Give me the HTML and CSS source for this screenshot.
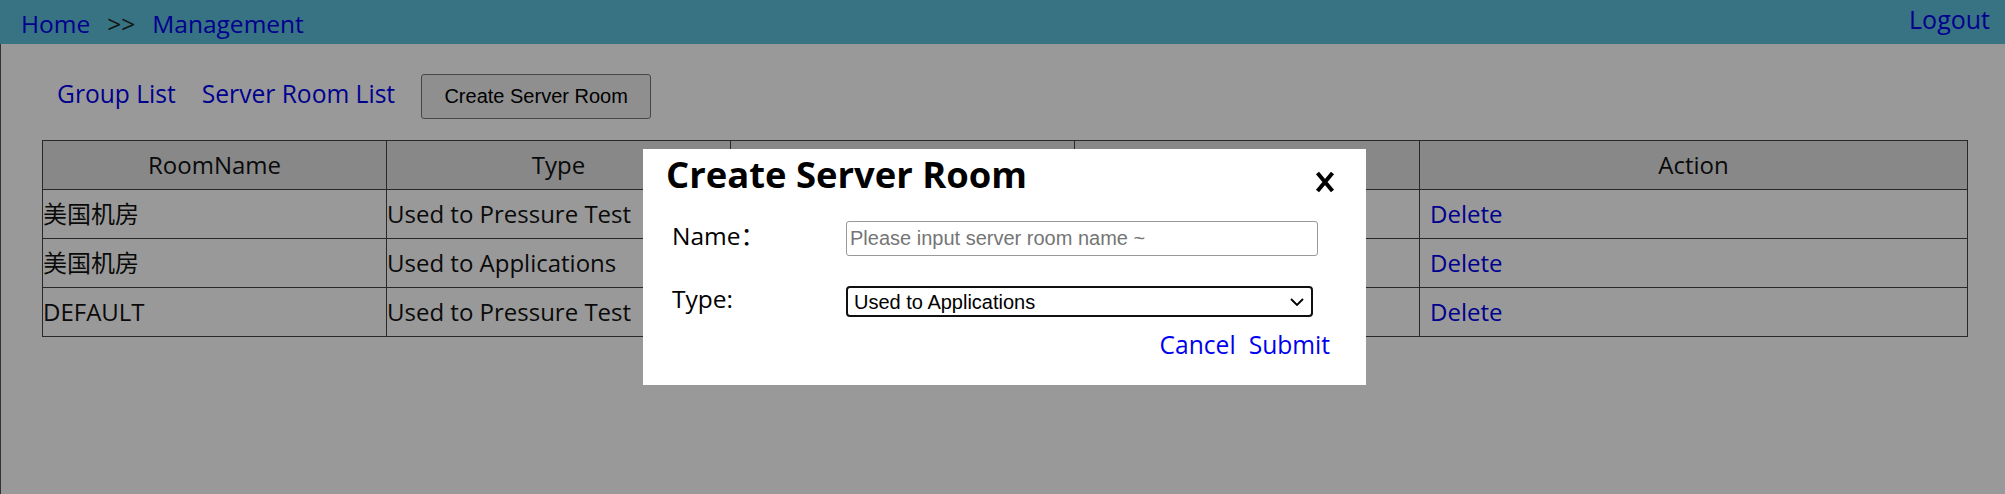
FILE: index.html
```html
<!DOCTYPE html>
<html lang="en">
<head>
<meta charset="utf-8">
<title>Server Room List</title>
<link rel="stylesheet" href="styles.css">
</head>
<body>
<header class="topbar">
  <nav class="crumbs"><a href="#">Home</a><span class="sep">&gt;&gt;</span><a href="#">Management</a></nav>
  <a class="logout" href="#">Logout</a>
</header>
<main class="content">
  <div class="toolbar">
    <a href="#" class="tab">Group List</a>
    <a href="#" class="tab">Server Room List</a>
    <button class="btn" type="button">Create Server Room</button>
  </div>
  <table class="rooms">
    <colgroup>
      <col class="c-name"><col class="c-type"><col class="c-desc"><col class="c-time"><col class="c-act">
    </colgroup>
    <thead>
      <tr><th>RoomName</th><th>Type</th><th></th><th></th><th>Action</th></tr>
    </thead>
    <tbody>
      <tr><td>美国机房</td><td>Used to Pressure Test</td><td></td><td></td><td class="act"><a href="#">Delete</a></td></tr>
      <tr><td>美国机房</td><td>Used to Applications</td><td></td><td></td><td class="act"><a href="#">Delete</a></td></tr>
      <tr><td>DEFAULT</td><td>Used to Pressure Test</td><td></td><td></td><td class="act"><a href="#">Delete</a></td></tr>
    </tbody>
  </table>
</main>
<div class="mask"></div>
<div class="dialog">
  <div class="dlg-head">
    <h2 class="dlg-title">Create Server Room</h2>
    <svg class="close" viewBox="0 0 22 24" width="22" height="24" aria-label="close"><path d="M3.5 3 L18.5 21 M18.5 3 L3.5 21" stroke="#000" stroke-width="4" fill="none"/></svg>
  </div>
  <div class="form-row row-name">
    <span class="label">Name：</span>
    <input class="field" type="text" placeholder="Please input server room name ~">
  </div>
  <div class="form-row row-type">
    <span class="label">Type:</span>
    <div class="select-wrap">
      <select class="select">
        <option>Used to Applications</option>
        <option>Used to Pressure Test</option>
      </select>
      <svg class="chev" viewBox="0 0 14 8" width="14" height="8"><path d="M1 1 L7 7 L13 1" stroke="#000" stroke-width="1.8" fill="none"/></svg>
    </div>
  </div>
  <div class="actions">
    <a href="#">Cancel</a>
    <a href="#">Submit</a>
  </div>
</div>
</body>
</html>
```
FILE: styles.css
```css
html, body {
  margin: 0;
  height: 100%;
}
body {
  font-family: "Open Sans", "Noto Sans CJK SC", sans-serif;
  font-size: 24px;
  color: #111;
  background: #fff;
}
a {
  color: #0000ee;
  text-decoration: none;
}
.topbar {
  display: flex;
  justify-content: space-between;
  align-items: flex-start;
  height: 44px;
  box-sizing: border-box;
  padding: 0 15px 0 21px;
  background: #5cc0d9;
  font-size: 24.5px;
}
.crumbs {
  display: flex;
  gap: 17px;
  margin-top: 7px;
  line-height: 33px;
}
.sep {
  color: #222;
}
.logout {
  margin-top: 3px;
  line-height: 33px;
  font-size: 25px;
}
.content {
  box-sizing: border-box;
  min-height: calc(100vh - 44px);
  border-left: 1px solid #555;
  padding: 30px 0 0 41px;
}
.toolbar {
  display: flex;
  align-items: baseline;
  gap: 26px;
  padding-left: 15px;
  line-height: 33px;
  font-size: 24.6px;
}
.btn {
  margin-left: 0;
  width: 230px;
  height: 45px;
  box-sizing: border-box;
  padding: 0;
  font-family: "Liberation Sans", Arial, sans-serif;
  font-size: 20px;
  line-height: 23px;
  color: #000;
  background: #efefef;
  border: 1px solid #767676;
  border-radius: 3px;
}
.rooms {
  margin-top: 21px;
  width: 1925px;
  border-collapse: collapse;
  table-layout: fixed;
}
.c-name, .c-type, .c-desc { width: 344px; }
.c-time { width: 345px; }
.c-act { width: 548px; }
.rooms th, .rooms td {
  border: 1px solid #444;
  padding: 8px 0;
  line-height: 32px;
  white-space: nowrap;
  overflow: hidden;
}
.rooms th {
  background: #e3e3e3;
  font-weight: normal;
  text-align: center;
}
.rooms td {
  text-align: left;
}
.rooms td.act {
  padding-left: 10px;
}
.mask {
  position: fixed;
  inset: 0;
  background: rgba(0, 0, 0, 0.4);
}
.dialog {
  position: fixed;
  left: 643px;
  top: 149px;
  width: 723px;
  height: 236px;
  box-sizing: border-box;
  padding: 1px 30px 0 23px;
  background: #fff;
  color: #000;
}
.dlg-head {
  display: flex;
  justify-content: space-between;
  align-items: flex-start;
}
.dlg-title {
  margin: 0;
  font-size: 36.4px;
  font-weight: 700;
  line-height: 49px;
}
.close {
  display: block;
  margin-top: 20px;
}
.form-row {
  display: flex;
  align-items: center;
  margin-left: 6px;
}
.row-name {
  margin-top: 22px;
}
.row-type {
  margin-top: 30px;
}
.label {
  width: 174px;
  line-height: 33px;
  margin-top: -6px;
  font-size: 24.5px;
}
.field {
  width: 472px;
  height: 35px;
  box-sizing: border-box;
  margin: 0;
  padding: 0 3px;
  font-family: "Liberation Sans", Arial, sans-serif;
  font-size: 20px;
  border: 1px solid #999;
  border-radius: 3px;
}
.field::placeholder {
  color: #757575;
}
.select-wrap {
  position: relative;
  display: flex;
}
.select {
  appearance: none;
  width: 467px;
  height: 31px;
  box-sizing: border-box;
  margin: 0;
  padding: 0 6px;
  font-family: "Liberation Sans", Arial, sans-serif;
  font-size: 20px;
  color: #000;
  background: #fff;
  border: 2px solid #101010;
  border-radius: 4px;
}
.chev {
  position: absolute;
  right: 9px;
  top: 12px;
  pointer-events: none;
}
.actions {
  display: flex;
  justify-content: flex-end;
  gap: 13px;
  margin-top: 11px;
  margin-right: 6px;
  line-height: 33px;
  font-size: 24.6px;
}
```
